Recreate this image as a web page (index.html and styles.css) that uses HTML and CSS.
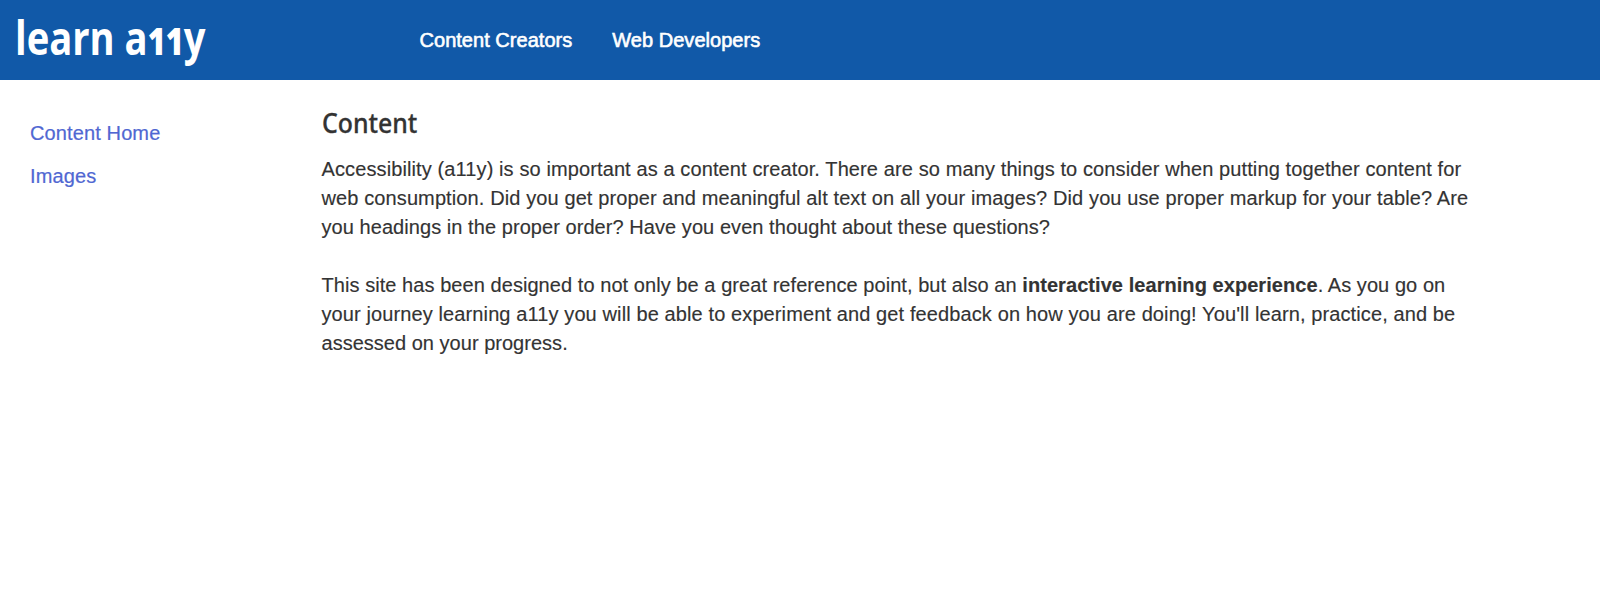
FILE: index.html
```html
<!DOCTYPE html>
<html lang="en">
<head>
<meta charset="utf-8">
<title>learn a11y</title>
<link rel="stylesheet" href="styles.css">
</head>
<body>
<header class="header">
  <a class="logo"><span class="logo-text">learn a<span class="digits">11</span>y</span></a>
  <nav class="nav"><a>Content Creators</a><a>Web Developers</a></nav>
</header>
<div class="layout">
  <aside class="sidebar"><a>Content Home</a><a>Images</a></aside>
  <main class="content">
    <h1>Content</h1>
    <p><span class="wide">Accessibility (a11y) is so important as a content creator. There are so many things to consider when putting together content for</span><br><span class="wide">web consumption. Did you get proper and meaningful alt text on all your images? Did you use proper markup for your table? Are</span><br><span>you headings in the proper order? Have you even thought about these questions?</span></p>
    <p><span>This site has been designed to not only be a great reference point, but also an <strong>interactive learning experience</strong>. As you go on</span><br><span class="wide">your journey learning a11y you will be able to experiment and get feedback on how you are doing! You'll learn, practice, and be</span><br><span class="last">assessed on your progress.</span></p>
  </main>
</div>
</body>
</html>
```
FILE: styles.css
```css
* { box-sizing: border-box; }
body { margin: 0; background: #fff; color: #333; font: 20px/29px "Liberation Sans", Arial, sans-serif; }
.header { height: 80px; background: #1159a8; display: flex; align-items: center; color: #fff; }
.logo { width: 419.5px; padding: 0 0 6px 15px; font: 700 46px/60px "Open Sans", sans-serif; }
.logo-text { display: inline-block; transform: scaleX(.83); transform-origin: left; white-space: nowrap; }
.digits { font-size: 37px; line-height: 1; font-weight: 800; }
.nav { display: flex; gap: 40px; -webkit-text-stroke: .6px; white-space: nowrap; letter-spacing: .03px; }
.layout { display: flex; }
.sidebar { width: 321.5px; padding: 39px 30px; display: flex; flex-direction: column; gap: 14px; color: #5067d2; letter-spacing: .12px; -webkit-text-stroke: .2px; }
.content { padding-top: 25px; white-space: nowrap; }
h1 { margin: 0 0 14px; font: 500 27px/36px "Noto Sans", sans-serif; -webkit-text-stroke: .3px; transform: scaleX(.92); transform-origin: left; }
p { margin: 0 0 29px; letter-spacing: .06px; -webkit-text-stroke: .15px; }
.wide { letter-spacing: .111px; }
.last { letter-spacing: .02px; }
```
